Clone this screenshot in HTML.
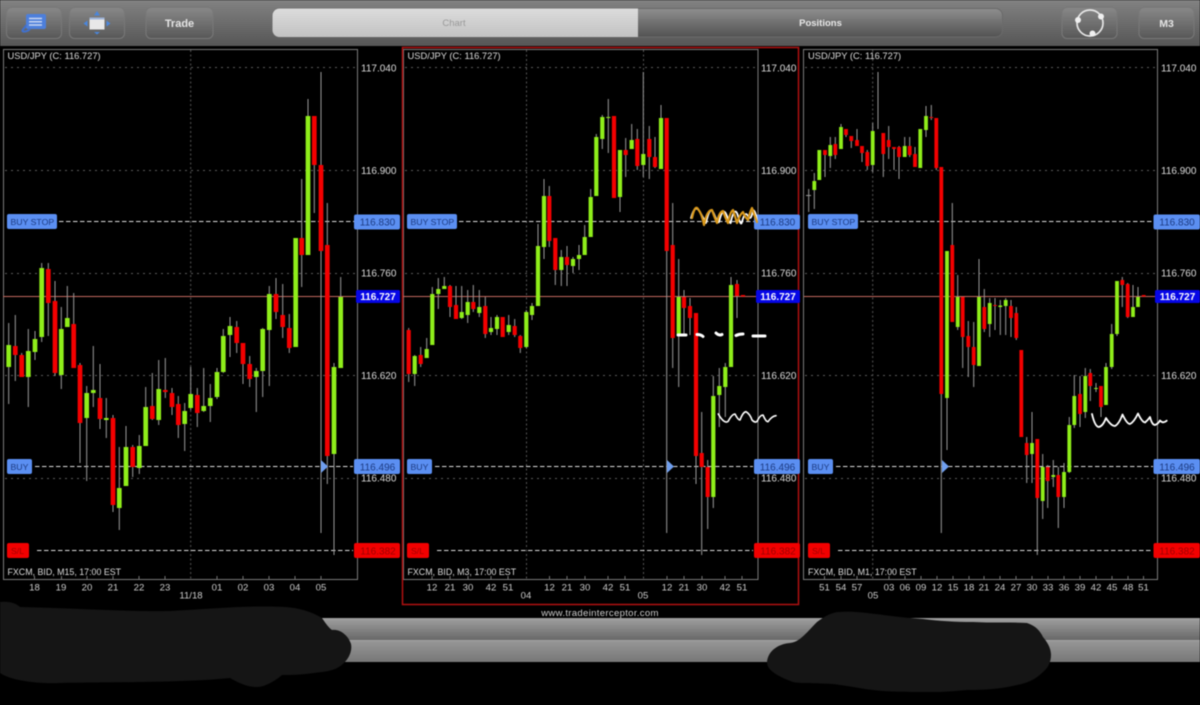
<!DOCTYPE html>
<html><head><meta charset="utf-8"><title>Charts</title>
<style>
html,body{margin:0;padding:0;background:#000;width:1200px;height:705px;overflow:hidden}
svg{display:block;position:absolute;left:0;top:0;filter:blur(.4px)}
text{font-family:"Liberation Sans",sans-serif}
.t{font-size:9.35px;fill:#ddd}
.b{font-size:8.85px;fill:#ddd}
.p{font-size:10px;fill:#ddd}
.a{font-size:9.6px;fill:#ccc;text-anchor:middle}
.l{font-size:8.7px;fill:#1c3a80}
.s{font-size:8.7px;fill:#a00000}
.v{font-size:10px;fill:#1c3a80;text-anchor:middle}
.r{font-size:10px;fill:#a00000;text-anchor:middle}
.k{font-size:10px;fill:#fff;font-weight:bold;text-anchor:middle}
.g{stroke:#5a5a5a;stroke-width:1;stroke-dasharray:2 4;fill:none}
.gv{stroke:#555;stroke-width:1;stroke-dasharray:2 2.5;fill:none}
.d{stroke:#ddd;stroke-width:1;stroke-dasharray:4.5 2.5;fill:none}
.w{stroke:#999;stroke-width:1;fill:none}
.n{fill:none;stroke:#fff;stroke-linecap:round;stroke-linejoin:round}
</style></head><body>
<svg width="1200" height="705" viewBox="0 0 1200 705" xmlns="http://www.w3.org/2000/svg">
<defs>
<linearGradient id="bar" x1="0" y1="0" x2="0" y2="1"><stop offset="0" stop-color="#828282"/><stop offset="1" stop-color="#565656"/></linearGradient>
<linearGradient id="btn" x1="0" y1="0" x2="0" y2="1"><stop offset="0" stop-color="#888"/><stop offset="1" stop-color="#585858"/></linearGradient>
<linearGradient id="seg" x1="0" y1="0" x2="0" y2="1"><stop offset="0" stop-color="#8e8e8e"/><stop offset="1" stop-color="#535353"/></linearGradient>
<linearGradient id="sel" x1="0" y1="0" x2="0" y2="1"><stop offset="0" stop-color="#dcdcdc"/><stop offset="1" stop-color="#c2c2c2"/></linearGradient>
<linearGradient id="s1" x1="0" y1="0" x2="0" y2="1"><stop offset="0" stop-color="#a0a0a0"/><stop offset="1" stop-color="#686868"/></linearGradient>
<linearGradient id="s2" x1="0" y1="0" x2="0" y2="1"><stop offset="0" stop-color="#989898"/><stop offset="1" stop-color="#777"/></linearGradient>
<clipPath id="segl"><rect x="272" y="8" width="366" height="29"/></clipPath>
</defs>
<rect width="1200" height="705" fill="#000"/>

<!-- top bar -->
<rect width="1200" height="46" fill="url(#bar)"/>
<g fill="url(#btn)" stroke="#787878">
<rect x="6.5" y="7.5" width="55" height="31" rx="5"/>
<rect x="69.5" y="7.5" width="55" height="31" rx="5"/>
<rect x="146" y="7.5" width="67" height="31" rx="5"/>
<rect x="1062" y="7.5" width="55" height="31" rx="5"/>
<rect x="1139" y="7.5" width="55" height="31" rx="5"/>
</g>
<rect x="272.5" y="8.5" width="730" height="28.5" rx="7" fill="url(#seg)" stroke="#6a6a6a"/>
<rect x="272.5" y="8.5" width="400" height="28.5" rx="7" fill="url(#sel)" clip-path="url(#segl)"/>
<text x="454" y="26" font-size="9.5" fill="#999" text-anchor="middle">Chart</text>
<text x="820.5" y="26" font-size="9.5" fill="#e8e8e8" font-weight="bold" text-anchor="middle">Positions</text>
<text x="179.5" y="27" font-size="11" fill="#e4e4e4" font-weight="bold" text-anchor="middle">Trade</text>
<text x="1166.5" y="27" font-size="10.5" fill="#e4e4e4" font-weight="bold" text-anchor="middle">M3</text>
<!-- icon 1 -->
<rect x="26" y="14" width="20" height="15" rx="2" fill="#4d7fdb"/>
<path d="M26 25C25 29 22 29 22.500 31C24 32.500 28 31 30 29" fill="none" stroke="#3f70cf" stroke-width="2"/>
<path d="M29 18.500H42M29 21.700H42M29 25H42" stroke="#c9d6f2" stroke-width="1.500"/>
<!-- icon 2 -->
<rect x="89.500" y="17.500" width="15" height="12" fill="#e8e8e8"/>
<rect x="89.500" y="17.500" width="15" height="2" fill="#9fb4d8"/>
<path d="M97 11l3 4.500h-6zM97 34.500l-3-2.500h6zM83.500 23.500l4-3v6zM110.500 23.500l-4-3v6z" fill="#4a86dc"/>
<!-- icon circle -->
<circle cx="1090" cy="23" r="13" fill="none" stroke="#e6e6e6" stroke-width="1.700"/>
<circle cx="1078" cy="20" r="3" fill="#f0f0f0"/><circle cx="1101" cy="16.500" r="3" fill="#f0f0f0"/><circle cx="1092.500" cy="33.500" r="3" fill="#f0f0f0"/>

<!-- chart frames -->
<path d="M3.500 49.500H357.500V579.500H3.500Z M403.500 49.500H758V579.500H403.500Z M803.500 49.500H1157.500V579.500H803.500Z" fill="none" stroke="#7a7a7a" stroke-width="1"/>
<rect x="402.500" y="47.500" width="396" height="557" fill="none" stroke="#b01010" stroke-width="1.500"/>

<!-- grid -->
<path class="g" d="M5 67.500H357M5 170.500H357M5 273.500H357M5 375.500H357M5 478.500H357M405 67.500H757M405 170.500H757M405 273.500H757M405 375.500H757M405 478.500H757M805 67.500H1157M805 170.500H1157M805 273.500H1157M805 375.500H1157M805 478.500H1157"/>
<path class="gv" d="M190.700 50V579M526.500 50V579M643.500 50V579M872.700 50V579"/>
<path d="M3 296.500H357M403 296.500H757M804 296.500H1157" stroke="#c4685e" stroke-width="1"/>
<path class="d" d="M59 221.500H354M35 466.500H353M37 550.500H353M459 221.500H754M435 466.500H753M437 550.500H753M860 221.500H1154M836 466.500H1153M838 550.500H1153"/>

<!-- axis ticks -->
<path stroke="#777" fill="none" d="M34.500 576V580M61.500 576V580M87 576V580M113 576V580M139 576V580M165 576V580M217 576V580M243 576V580M269 576V580M295 576V580M321 576V580M432 576V580M450 576V580M468 576V580M491 576V580M508 576V580M549.500 576V580M567 576V580M585 576V580M608 576V580M625 576V580M667 576V580M684 576V580M702 576V580M725 576V580M742 576V580M824.500 576V580M841 576V580M857 576V580M889 576V580M905 576V580M921 576V580M937 576V580M953 576V580M969 576V580M984 576V580M1000 576V580M1016 576V580M1032 576V580M1048 576V580M1064 576V580M1080 576V580M1096 576V580M1112 576V580M1128 576V580M1143.500 576V580"/>

<!-- chart 1 wicks -->
<path class="w" d="M8.700 323V404M15.300 315V381M21.700 353V377M28.300 329V407M35 331V360M41.700 263V342M48.300 263V336M55 281V376M61.300 307V389M67.300 286V327M73.700 293V368M80 363V463M86.700 386V481M93.300 346V407M100 364V429M106.300 398V438M113 415V512M119.300 447V530M126 426V486M132.700 445V477M139.300 435V474M145.700 387V446M152.300 373V420M158.700 360V425M165.300 358V398M172 388V415M178.300 396V438M184.700 403V451M190.700 367V410M197.300 388V427M203.700 368V412M210.300 384V422M217 368V399M223.300 329V373M230 317V357M236.700 321V353M243 343V384M249.700 356V387M256.300 368V412M262.700 328V397M269.300 286V386M276 278V319M282.700 284V338M289.300 314V353M301.700 179V287M308 99V255M314.300 116V213M321 72V533M327.300 203V484M334 363V555M340.700 277V368"/>
<!-- chart 1 green -->
<path fill="none" stroke="#8fee1a" stroke-width="4.700" d="M8.700 345V367M28.300 351V377M35 339V352M41.700 268V337M61.300 329V375M67.300 318V327M86.700 393V418M93.300 390V393M106.300 418V420M119.300 488V508M126 447V486M139.300 446V468M145.700 407V446M158.700 389V420M184.700 411V424M190.700 394V408M203.700 406V411M210.300 398V406M217 372V397M223.300 336V372M230 326V335M256.300 371V377M262.700 329V371M269.300 294V330M295.700 238V347M308 116V255M334 367V454M340.700 297V368"/>
<!-- chart 1 red -->
<path fill="none" stroke="#f40000" stroke-width="4.700" d="M15.300 346V355M21.700 355V377M48.300 269V303M55 301V373M73.700 324V368M80 365V423M100 398V419M113 418V505M132.700 447V467M152.300 406V419M165.300 390V392M172 393V407M178.300 404V425M197.300 395V413M236.700 327V343M243 343V364M249.700 364V379M276 294V312M282.700 315V327M289.300 328V348M301.700 238V255M314.300 116V165M321 165V251M327.300 245V456"/>

<!-- chart 2 wicks -->
<path class="w" d="M408.700 328V382M414.700 355V386M420.700 347V367M426.700 338V358M432.300 287V345M438.300 278V309M444.300 277V289M450 285V317M456 286V319M461.700 286V319M467.700 290V323M473.300 285V312M479.300 290V317M485.300 297V338M491 317V335M497 315V335M502.700 317V337M508.700 315V335M514.700 319V337M520.300 335V353M526.300 310V348M532 303V320M538 224V306M544 179V259M549.300 186V247M555.300 238V285M561.300 250V286M567 246V286M573 257V273M579 245V270M584.700 225V255M590.700 189V237M596.300 134V196M602.300 115V149M608.300 99V153M614 116V198M620 150V212M625.700 138V177M631.700 124V149M637.300 129V170M643.300 72V177M649.300 126V179M655 137V168M661 105V169M666.700 118V533M672.700 203V368M678.700 259V387M684 290V335M690 298V335M696 313V484M701.700 412V555M707.700 460V529M713.300 376V508M719.300 368V427M725.300 363V417M731 277V367M737 280V318"/>
<!-- chart 2 green -->
<path fill="none" stroke="#8fee1a" stroke-width="4.200" d="M414.700 356V374M426.700 349V358M432.300 294V345M438.300 289V294M444.300 286V289M461.700 312V318M467.700 302V315M479.300 307V313M491 328V332M497 317V329M508.700 325V332M526.300 312V347M532 306V315M538 246V306M544 196V247M561.300 257V270M573 259V266M579 255V259M584.700 237V255M590.700 197V237M596.300 137V196M602.300 117V139M608.300 117V118M620 150V197M631.700 140V149M643.300 154V165M661 118V169M678.700 297V334M713.300 396V497M719.300 386V395M725.300 367V387M731 285V367"/>
<!-- chart 2 red -->
<path fill="none" stroke="#f40000" stroke-width="4.200" d="M408.700 330V374M420.700 355V364M450 286V307M456 305V319M473.300 302V309M485.300 306V334M502.700 317V337M514.700 326V335M520.300 336V348M549.300 196V241M555.300 238V270M567 257V265M614 116V198M625.700 150V155M637.300 139V166M649.300 139V157M655 157V167M666.700 118V251M672.700 245V338M684 297V308M690 306V318M696 313V456M701.700 453V467M707.700 467V497M737 284V296M743 295V296.500"/>

<!-- chart 3 wicks -->
<path class="w" d="M808.700 189V212M806 195.500H811M814.300 173V209M819.300 150V180M825 150V177M830.300 137V168M835.300 137V159M841 124V149M846 129V137M851.300 136V148M857 129V146M862 146V162M867.300 150V170M872.700 123V172M878 72V129M883.300 133V177M888.700 126V159M894 147V170M899 146V179M904.700 137V157M909.700 137V157M915 147V167M920.300 129V168M926 106V137M931.300 105V120M936.300 118V170M941.300 167V533M947 251V450M952.300 203V322M957.700 275V330M962.700 297V368M968.300 321V377M973.700 322V387M979 259V366M984.300 289V332M989.700 298V337M995 298V330M1000.300 300V335M1005.700 298V335M1011 300V337M1016.300 307V340M1026.700 437V483M1032 412V483M1037.300 439V555M1042.700 454V519M1047.700 465V508M1053.300 460V487M1058.300 467V528M1064 463V508M1069.300 417V473M1074.300 375V428M1080 376V427M1085.300 368V418M1090.300 369V401M1096 383V392M1101 386V417M1106 363V405M1111.700 324V369M1117 281V336M1122.300 277V307M1127.700 283V318M1133 285V317M1138 287V307"/>
<!-- chart 3 green -->
<path fill="none" stroke="#8fee1a" stroke-width="3.800" d="M814.300 181V190M819.300 150V180M830.300 145V156M841 127V149M872.700 131V165M904.700 146V157M920.300 129V168M926 116V130M947 251V398M957.700 297V327M979 297V366M989.700 303V324M1000.300 305.500V307M1005.700 300V306M1032 443V454M1042.700 467V501M1053.300 475V477M1064 472V497M1069.300 425V472M1074.300 396V425M1085.300 376V412M1096 388V389M1106 367V405M1111.700 334V367M1117 281V334M1133 307V317M1138 297V307"/>
<!-- chart 3 red -->
<path fill="none" stroke="#f40000" stroke-width="3.800" d="M825 150V155M835.300 144V155M846 129V135M851.300 136V141M857 140V146M862 146V153M867.300 152V166M883.300 133V154M888.700 140V147M894 147V149M899 147V157M909.700 146V155M915 154V167M931.300 117V118M936.300 118V168M941.300 167V394M952.300 245V322M962.700 297V337M968.300 336V347M973.700 347V365M984.300 307V329M995 305V306M1011 306V318M1016.300 313V338M1021.300 350V437M1026.700 443V455M1037.300 439V498M1047.700 467V481M1058.300 475V497M1080 394V414M1090.300 373V386M1101 386V407M1122.300 280V285M1127.700 284V317M1143.700 295V296.500"/>

<!-- order markers -->
<path d="M321 460L328 466.500L321 473ZM667 460L674 466.500L667 473ZM942 460L949 466.500L942 473Z" fill="#6f9ff0"/>

<!-- labels -->
<g>
<g fill="#5b8ff2">
<rect x="7" y="214" width="50" height="15" rx="2"/><rect x="7" y="459" width="25" height="15" rx="2"/>
<rect x="354" y="214.500" width="46" height="15" rx="2"/><rect x="354" y="459" width="46" height="15" rx="2"/>
<rect x="407" y="214" width="50" height="15" rx="2"/><rect x="407" y="459" width="25" height="15" rx="2"/>
<rect x="754" y="214.500" width="46" height="15" rx="2"/><rect x="754" y="459" width="46" height="15" rx="2"/>
<rect x="808" y="214" width="50" height="15" rx="2"/><rect x="808" y="459" width="25" height="15" rx="2"/>
<rect x="1153.500" y="214.500" width="46.500" height="15" rx="2"/><rect x="1153.500" y="459" width="46.500" height="15" rx="2"/>
</g>
<g fill="#f20000">
<rect x="7" y="543" width="22" height="15" rx="2"/><rect x="354" y="543" width="46" height="15" rx="2"/>
<rect x="407" y="543" width="22" height="15" rx="2"/><rect x="754" y="543" width="46" height="15" rx="2"/>
<rect x="808" y="543" width="22" height="15" rx="2"/><rect x="1153.500" y="543" width="46.500" height="15" rx="2"/>
</g>
<g fill="#0606e6">
<rect x="356" y="290" width="44" height="13" rx="1.500"/><rect x="756" y="290" width="44" height="13" rx="1.500"/><rect x="1155" y="290" width="45" height="13" rx="1.500"/>
</g>
</g>

<text class="t" x="7.500" y="59">USD/JPY (C: 116.727)</text>
<text class="t" x="407.500" y="59">USD/JPY (C: 116.727)</text>
<text class="t" x="808" y="59">USD/JPY (C: 116.727)</text>
<text class="b" x="7.500" y="575">FXCM, BID, M15, 17:00 EST</text>
<text class="b" x="407.500" y="575">FXCM, BID, M3, 17:00 EST</text>
<text class="b" x="808" y="575">FXCM, BID, M1, 17:00 EST</text>

<text class="l" x="10.500" y="225">BUY STOP</text><text class="l" x="10.500" y="470">BUY</text><text class="s" x="11" y="554">S/L</text>
<text class="l" x="410.500" y="225">BUY STOP</text><text class="l" x="410.500" y="470">BUY</text><text class="s" x="411" y="554">S/L</text>
<text class="l" x="811.500" y="225">BUY STOP</text><text class="l" x="811.500" y="470">BUY</text><text class="s" x="812" y="554">S/L</text>

<text class="v" x="377.500" y="225.500">116.830</text><text class="k" x="378" y="300">116.727</text><text class="v" x="377.500" y="470.500">116.496</text><text class="r" x="378" y="554.500">116.382</text>
<text class="v" x="777.500" y="225.500">116.830</text><text class="k" x="778" y="300">116.727</text><text class="v" x="777.500" y="470.500">116.496</text><text class="r" x="778" y="554.500">116.382</text>
<text class="v" x="1177" y="225.500">116.830</text><text class="k" x="1177.500" y="300">116.727</text><text class="v" x="1177" y="470.500">116.496</text><text class="r" x="1177" y="554.500">116.382</text>

<g>
<text class="p" x="361" y="71.500">117.040</text><text class="p" x="361" y="174">116.900</text><text class="p" x="361" y="276.500">116.760</text><text class="p" x="361" y="379">116.620</text><text class="p" x="361" y="481.500">116.480</text>
<text class="p" x="761" y="71.500">117.040</text><text class="p" x="761" y="174">116.900</text><text class="p" x="761" y="276.500">116.760</text><text class="p" x="761" y="379">116.620</text><text class="p" x="761" y="481.500">116.480</text>
<text class="p" x="1161" y="71.500">117.040</text><text class="p" x="1161" y="174">116.900</text><text class="p" x="1161" y="276.500">116.760</text><text class="p" x="1161" y="379">116.620</text><text class="p" x="1161" y="481.500">116.480</text>
</g>

<!-- axis labels -->
<g>
<text class="a" x="34.500" y="590.500">18</text><text class="a" x="61" y="590.500">19</text><text class="a" x="87" y="590.500">20</text><text class="a" x="113" y="590.500">21</text><text class="a" x="139" y="590.500">22</text><text class="a" x="165" y="590.500">23</text><text class="a" x="217" y="590.500">01</text><text class="a" x="243" y="590.500">02</text><text class="a" x="269" y="590.500">03</text><text class="a" x="295" y="590.500">04</text><text class="a" x="321" y="590.500">05</text>
<text class="a" x="191" y="598.500">11/18</text>
<text class="a" x="432" y="590.500">12</text><text class="a" x="450" y="590.500">21</text><text class="a" x="468" y="590.500">30</text><text class="a" x="491" y="590.500">42</text><text class="a" x="508" y="590.500">51</text>
<text class="a" x="549.500" y="590.500">12</text><text class="a" x="567" y="590.500">21</text><text class="a" x="585" y="590.500">30</text><text class="a" x="608" y="590.500">42</text><text class="a" x="625" y="590.500">51</text>
<text class="a" x="667" y="590.500">12</text><text class="a" x="684" y="590.500">21</text><text class="a" x="702" y="590.500">30</text><text class="a" x="725" y="590.500">42</text><text class="a" x="742" y="590.500">51</text>
<text class="a" x="526" y="598.500">04</text><text class="a" x="643" y="598.500">05</text>
<text class="a" x="824.500" y="590.500">51</text><text class="a" x="841" y="590.500">54</text><text class="a" x="857" y="590.500">57</text><text class="a" x="889" y="590.500">03</text><text class="a" x="905" y="590.500">06</text><text class="a" x="921" y="590.500">09</text><text class="a" x="937" y="590.500">12</text><text class="a" x="953" y="590.500">15</text><text class="a" x="969" y="590.500">18</text><text class="a" x="984" y="590.500">21</text><text class="a" x="1000" y="590.500">24</text><text class="a" x="1016" y="590.500">27</text><text class="a" x="1032" y="590.500">30</text><text class="a" x="1048" y="590.500">33</text><text class="a" x="1064" y="590.500">36</text><text class="a" x="1080" y="590.500">39</text><text class="a" x="1096" y="590.500">42</text><text class="a" x="1112" y="590.500">45</text><text class="a" x="1128" y="590.500">48</text><text class="a" x="1143.500" y="590.500">51</text>
<text class="a" x="873" y="598.500">05</text>
</g>
<text x="600" y="616" font-size="9.600" fill="#ccc" text-anchor="middle" letter-spacing=".3">www.tradeinterceptor.com</text>

<!-- scribbles -->
<path class="n" stroke-width="1.800" d="M691 218Q695 203 700 212T706 223Q710 204 714 214T719 222Q723 205 727 216T731 221Q735 205 738 216T742 222Q745 210 748 216T753 210Q756 211 757 222"/>
<path fill="none" stroke="#d9981a" stroke-width="2.200" stroke-linejoin="round" stroke-linecap="round" d="M692 218Q695 204 698 209Q702 214 704 225Q707 210 712 210Q714 216 717 223Q719 212 723 211Q725 217 728 223Q730 212 733 210Q735 216 737 223Q740 214 743 212Q745 217 748 220Q750 212 752 208Q754 214 757 222"/>
<path class="n" stroke-width="1.600" d="M718.300 414Q724 424 728 421.500Q732 414 735 414Q738 420 740 420Q743 412 746 411.700Q750 414 752 420Q755 423 757 421.500Q760 415 763 415Q766 422 768 421.700Q772 416 776 415.700"/>
<path class="n" stroke-width="1.800" d="M1092 414Q1095 427 1099 427Q1103 426 1106 418Q1111 426 1115 426Q1119 424 1122.500 414.500Q1127 424 1130 424Q1134 422 1138 413.500Q1142 422 1145 422.500Q1148 420 1150 417Q1152 425 1155 425Q1158 424 1160 420.500Q1163 424 1166.700 420.700"/>
<path class="n" stroke-width="3" d="M678 335H686M697 334.500Q701 334.500 703 336.500M716 333Q719 336 722 334.500M736 335.500Q739 334 743 334M753 336H765"/>

<!-- bottom strip -->
<rect x="0" y="618" width="1200" height="22" fill="url(#s1)"/>
<rect x="0" y="640" width="1200" height="22" fill="url(#s2)"/>
<rect x="0" y="640" width="1200" height="1" fill="#a2a2a2"/>

<!-- redactions -->
<path fill="#151515" d="M0 602C8 601 16 603 20 607C70 608 130 612 170 611C210 609 250 605 285 607C300 608 312 612 322 618C326 624 329 628 332 630C340 629 348 635 351 644C353 654 345 665 335 669C327 672 320 672 314 673C300 675 290 675 282 675C275 681 265 687 257 687C246 687 237 682 230 678C180 683 100 682 60 683C35 684 10 680 0 673Z"/>
<path fill="#151515" d="M767 662C768 651 778 644 790 643C800 642 807 632 817 622C825 616 832 612 840 612C848 611 858 612 867 613C885 615 905 618 923 619C940 621 955 622 973 622C990 623 1010 622 1027 623C1036 626 1040 631 1043 637C1049 644 1051 650 1051 655C1051 662 1048 668 1043 672C1035 680 1027 683 1017 685C1000 689 985 690 967 690C955 691 945 692 933 692C915 692 900 692 883 691C868 690 855 687 840 685C830 683 820 684 810 683C803 683 798 683 793 682C785 679 778 676 773 672C769 669 767 666 767 662Z"/>
</svg>
</body></html>
